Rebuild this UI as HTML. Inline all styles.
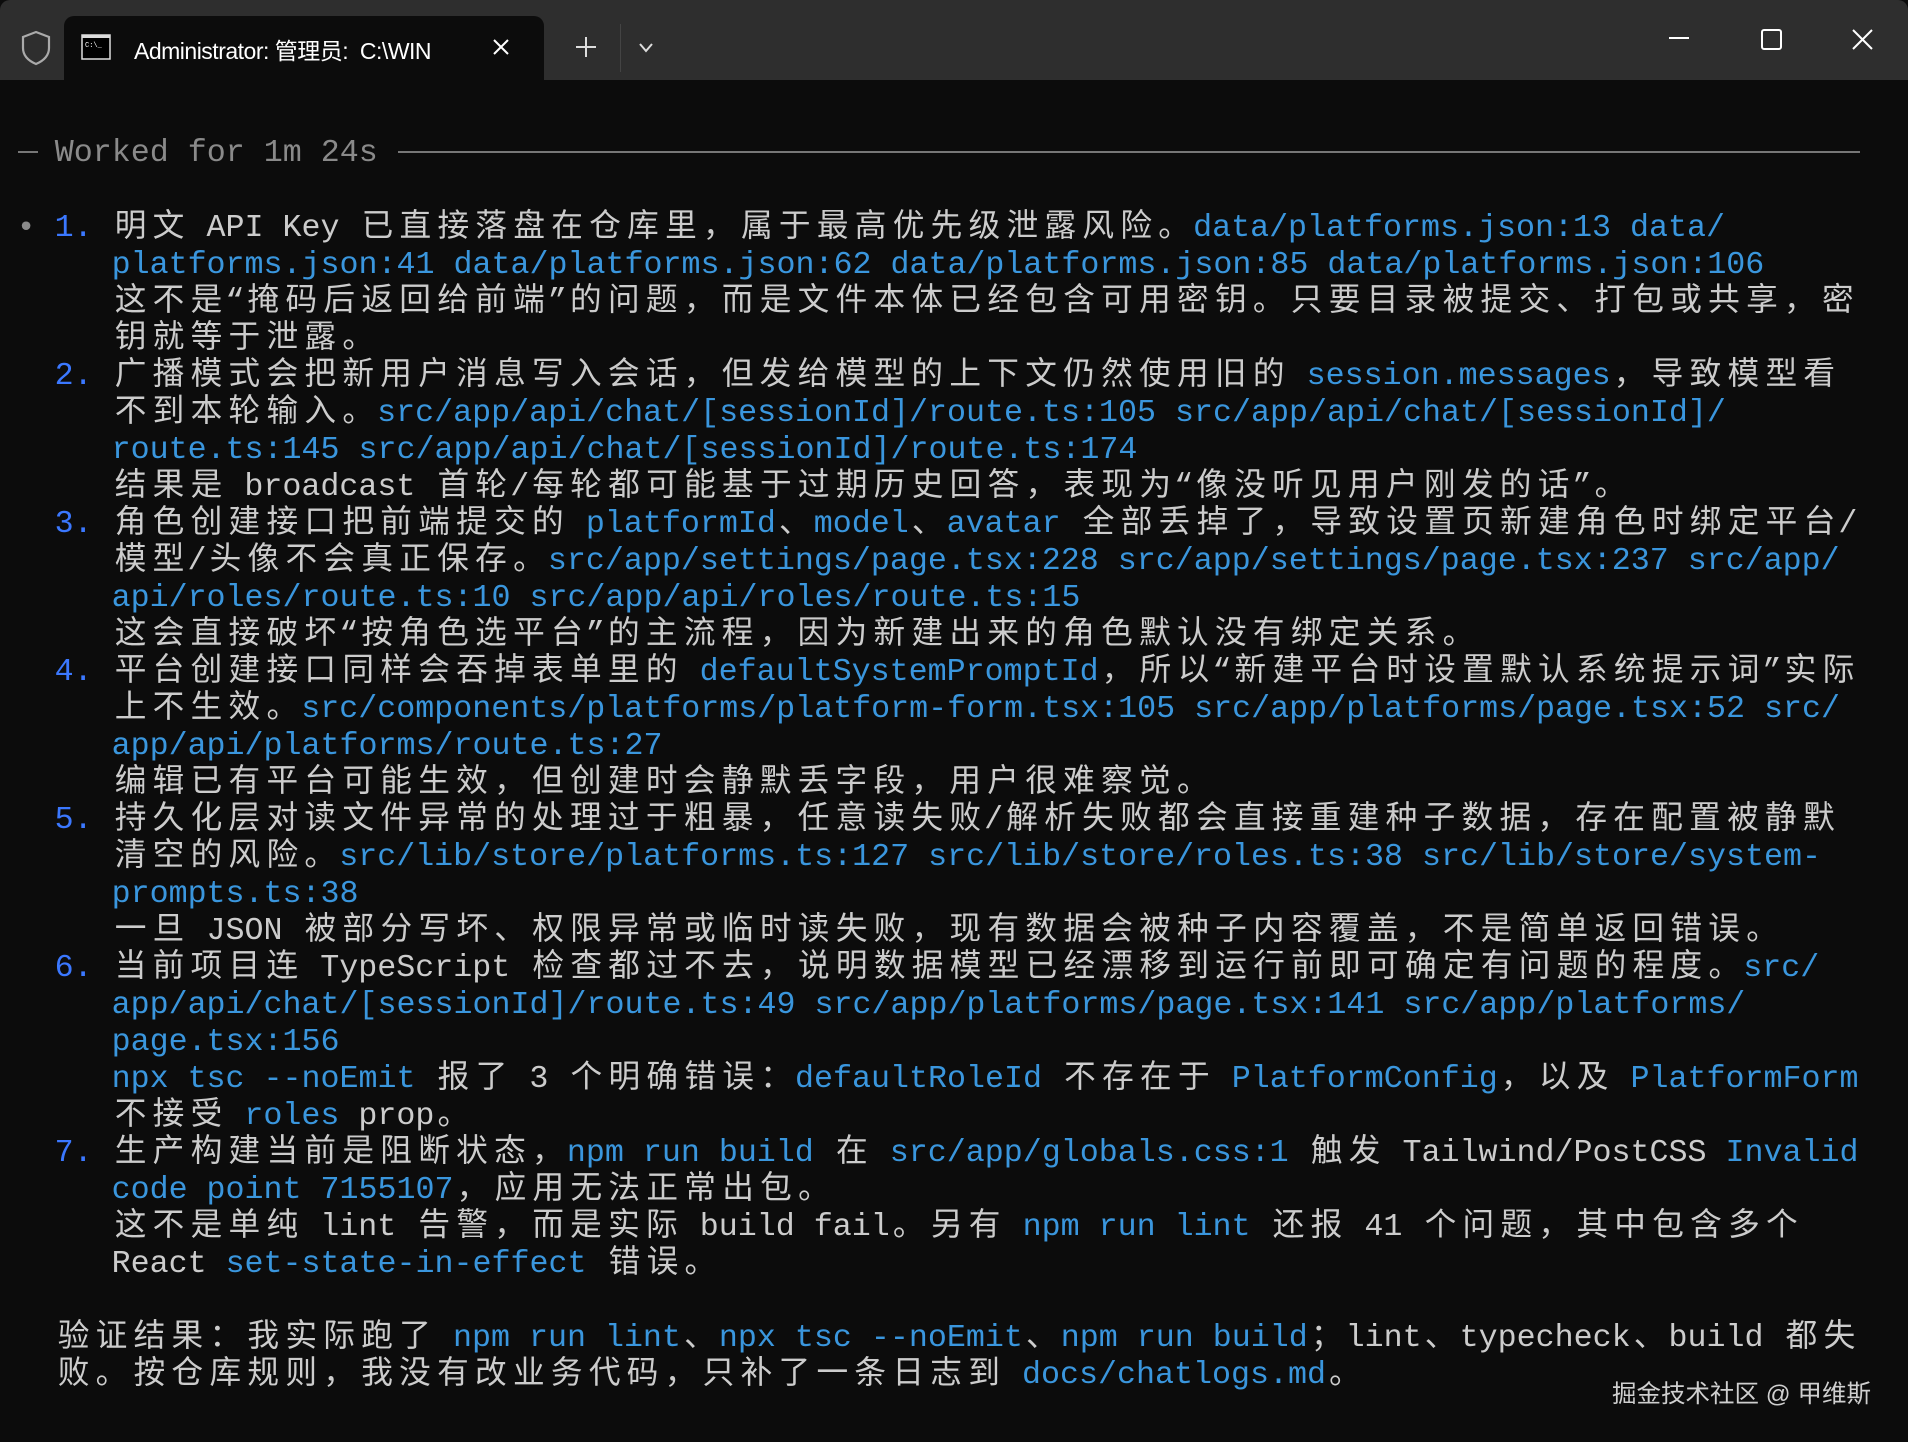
<!DOCTYPE html>
<html><head><meta charset="utf-8"><style>
html,body{margin:0;padding:0;width:1908px;height:1442px;overflow:hidden;background:#0c0c0c}
#bar{position:absolute;left:0;top:0;width:1908px;height:80px;background:#2e2e2e;border-radius:10px 10px 0 0}
#tab{position:absolute;left:64px;top:16px;width:480px;height:64px;background:#0c0c0c;border-radius:10px 10px 0 0}
#title{position:absolute;left:134px;top:32px;font:23px "Liberation Sans","Noto Sans CJK SC",sans-serif;letter-spacing:-0.5px;color:#fff;white-space:nowrap;width:330px;overflow:hidden}
#t{position:absolute;left:16.6px;top:210px;margin:0;font:31.67px/37px "Liberation Mono","Noto Sans CJK SC",monospace;color:#cccccc;white-space:pre}
#t b{font-weight:normal;color:#3a96dd}
#t i{font-style:normal;color:#3b78ff}
.c{display:inline-block;width:37.95px;text-align:center}
.g{color:#8a8a8a}
#wm{position:absolute;left:1612px;top:1375px;font:24.5px "Liberation Sans","Noto Sans CJK SC",sans-serif;color:#cfcfcf}
</style></head><body>
<div id="bar"></div>
<div id="tab"></div>
<svg style="position:absolute;left:20px;top:30px" width="32" height="36" viewBox="0 0 32 36"><path d="M16 2 L29 7 V18 C29 26 23 31 16 34 C9 31 3 26 3 18 V7 Z" fill="none" stroke="#aaa" stroke-width="2.2"/></svg>
<svg style="position:absolute;left:81px;top:34px" width="30" height="26" viewBox="0 0 30 26"><rect x="1" y="1" width="28" height="24" fill="#000" stroke="#ddd" stroke-width="1.5"/><rect x="1" y="1" width="28" height="3" fill="#ddd"/><text x="4" y="13" font-size="7" fill="#fff" font-family="Liberation Mono">C:\_</text></svg>
<div id="title">Administrator: 管理员:&nbsp; C:\WIN</div>
<svg style="position:absolute;left:492px;top:38px" width="18" height="18" viewBox="0 0 18 18"><path d="M2 2L16 16M16 2L2 16" stroke="#fff" stroke-width="2"/></svg>
<svg style="position:absolute;left:575px;top:36px" width="22" height="22" viewBox="0 0 22 22"><path d="M11 1V21M1 11H21" stroke="#ddd" stroke-width="2"/></svg>
<div style="position:absolute;left:620px;top:24px;width:1px;height:48px;background:#444"></div>
<svg style="position:absolute;left:638px;top:42px" width="16" height="12" viewBox="0 0 16 12"><path d="M2 2L8 9L14 2" fill="none" stroke="#ddd" stroke-width="2"/></svg>
<div style="position:absolute;left:1669px;top:37px;width:20px;height:2px;background:#fff"></div>
<div style="position:absolute;left:1761px;top:29px;width:17px;height:17px;border:2px solid #fff;border-radius:3px"></div>
<svg style="position:absolute;left:1852px;top:29px" width="21" height="21" viewBox="0 0 21 21"><path d="M1 1L20 20M20 1L1 20" stroke="#fff" stroke-width="2"/></svg>
<div style="position:absolute;left:398px;top:151px;width:1462px;height:2px;background:#777"></div>
<div style="position:absolute;left:18px;top:151px;width:20px;height:2px;background:#777"></div>
<pre id="t"><span class="g" style="position:absolute;top:-75px;left:38.2px">Worked for 1m 24s</span><span class="g">•</span> <i>1.</i> 明文 API Key 已直接落盘在仓库里，属于最高优先级泄露风险。<b>data/platforms.json:13 data/</b>
     <b>platforms.json:41 data/platforms.json:62 data/platforms.json:85 data/platforms.json:106</b>
     这不是“掩码后返回给前端”的问题，而是文件本体已经包含可用密钥。只要目录被提交、打包或共享，密
     钥就等于泄露。
  <i>2.</i> 广播模式会把新用户消息写入会话，但发给模型的上下文仍然使用旧的 <b>session.messages</b>，导致模型看
     不到本轮输入。<b>src/app/api/chat/[sessionId]/route.ts:105 src/app/api/chat/[sessionId]/</b>
     <b>route.ts:145 src/app/api/chat/[sessionId]/route.ts:174</b>
     结果是 broadcast 首轮/每轮都可能基于过期历史回答，表现为“像没听见用户刚发的话”。
  <i>3.</i> 角色创建接口把前端提交的 <b>platformId</b>、<b>model</b>、<b>avatar</b> 全部丢掉了，导致设置页新建角色时绑定平台/
     模型/头像不会真正保存。<b>src/app/settings/page.tsx:228 src/app/settings/page.tsx:237 src/app/</b>
     <b>api/roles/route.ts:10 src/app/api/roles/route.ts:15</b>
     这会直接破坏“按角色选平台”的主流程，因为新建出来的角色默认没有绑定关系。
  <i>4.</i> 平台创建接口同样会吞掉表单里的 <b>defaultSystemPromptId</b>，所以“新建平台时设置默认系统提示词”实际
     上不生效。<b>src/components/platforms/platform-form.tsx:105 src/app/platforms/page.tsx:52 src/</b>
     <b>app/api/platforms/route.ts:27</b>
     编辑已有平台可能生效，但创建时会静默丢字段，用户很难察觉。
  <i>5.</i> 持久化层对读文件异常的处理过于粗暴，任意读失败/解析失败都会直接重建种子数据，存在配置被静默
     清空的风险。<b>src/lib/store/platforms.ts:127 src/lib/store/roles.ts:38 src/lib/store/system-</b>
     <b>prompts.ts:38</b>
     一旦 JSON 被部分写坏、权限异常或临时读失败，现有数据会被种子内容覆盖，不是简单返回错误。
  <i>6.</i> 当前项目连 TypeScript 检查都过不去，说明数据模型已经漂移到运行前即可确定有问题的程度。<b>src/</b>
     <b>app/api/chat/[sessionId]/route.ts:49 src/app/platforms/page.tsx:141 src/app/platforms/</b>
     <b>page.tsx:156</b>
     <b>npx tsc --noEmit</b> 报了 3 个明确错误：<b>defaultRoleId</b> 不存在于 <b>PlatformConfig</b>，以及 <b>PlatformForm</b>
     不接受 <b>roles</b> prop。
  <i>7.</i> 生产构建当前是阻断状态，<b>npm run build</b> 在 <b>src/app/globals.css:1</b> 触发 Tailwind/PostCSS <b>Invalid</b>
     <b>code point 7155107</b>，应用无法正常出包。
     这不是单纯 lint 告警，而是实际 build fail。另有 <b>npm run lint</b> 还报 41 个问题，其中包含多个
     React <b>set-state-in-effect</b> 错误。

  验证结果：我实际跑了 <b>npm run lint</b>、<b>npx tsc --noEmit</b>、<b>npm run build</b>；lint、typecheck、build 都失
  败。按仓库规则，我没有改业务代码，只补了一条日志到 <b>docs/chatlogs.md</b>。</pre>
<div id="wm">掘金技术社区 @ 甲维斯</div>
<script>
(function(){
var re=/[\u2e80-\uffef]/;
var w=document.createTreeWalker(document.getElementById('t'),NodeFilter.SHOW_TEXT,null);
var nodes=[];while(w.nextNode())nodes.push(w.currentNode);
nodes.forEach(function(n){
 var s=n.nodeValue;if(!re.test(s))return;
 var f=document.createDocumentFragment(),buf='';
 for(var i=0;i<s.length;i++){var ch=s[i];
  if(re.test(ch)){if(buf){f.appendChild(document.createTextNode(buf));buf='';}
   var sp=document.createElement('span');sp.className='c';sp.textContent=ch;f.appendChild(sp);}
  else buf+=ch;}
 if(buf)f.appendChild(document.createTextNode(buf));
 n.parentNode.replaceChild(f,n);
});
})();
</script>
</body></html>
